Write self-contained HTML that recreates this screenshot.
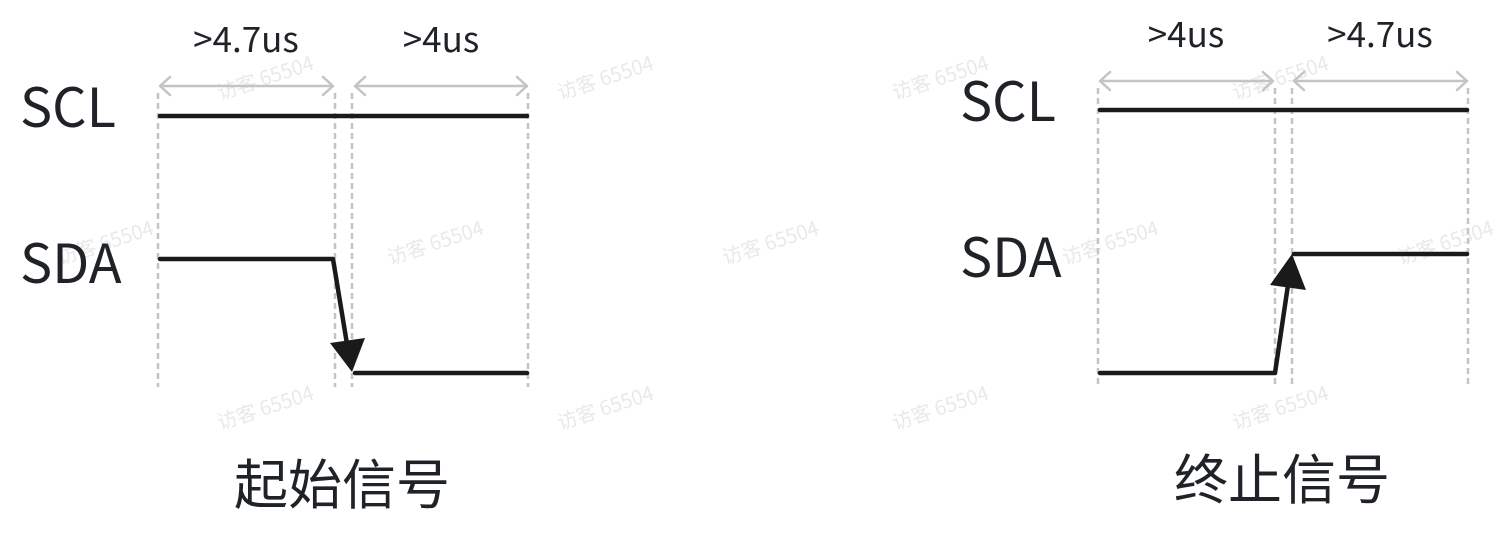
<!DOCTYPE html>
<html><head><meta charset="utf-8"><style>
html,body{margin:0;padding:0;background:#fff;width:1508px;height:543px;overflow:hidden}
svg{display:block}
text{font-family:"Noto Sans CJK SC","Liberation Sans",sans-serif;fill:#1f2328}
text.wm{font-size:20px;fill:#e9e9e9}
</style></head><body>
<svg width="1508" height="543" viewBox="0 0 1508 543" xmlns="http://www.w3.org/2000/svg">
<text class="wm" x="220" y="100" transform="rotate(-18 220 100)">访客 65504</text>
<text class="wm" x="560" y="100" transform="rotate(-18 560 100)">访客 65504</text>
<text class="wm" x="895" y="100" transform="rotate(-18 895 100)">访客 65504</text>
<text class="wm" x="1235" y="100" transform="rotate(-18 1235 100)">访客 65504</text>
<text class="wm" x="60" y="265" transform="rotate(-18 60 265)">访客 65504</text>
<text class="wm" x="390" y="265" transform="rotate(-18 390 265)">访客 65504</text>
<text class="wm" x="725" y="265" transform="rotate(-18 725 265)">访客 65504</text>
<text class="wm" x="1065" y="265" transform="rotate(-18 1065 265)">访客 65504</text>
<text class="wm" x="1400" y="265" transform="rotate(-18 1400 265)">访客 65504</text>
<text class="wm" x="220" y="430" transform="rotate(-18 220 430)">访客 65504</text>
<text class="wm" x="560" y="430" transform="rotate(-18 560 430)">访客 65504</text>
<text class="wm" x="895" y="430" transform="rotate(-18 895 430)">访客 65504</text>
<text class="wm" x="1235" y="430" transform="rotate(-18 1235 430)">访客 65504</text>
<g stroke="#c4c4c4" stroke-width="2.5" stroke-dasharray="6 4">
<line x1="158" y1="93" x2="158" y2="387"/><line x1="335" y1="93" x2="335" y2="387"/>
<line x1="352" y1="93" x2="352" y2="387"/><line x1="528" y1="93" x2="528" y2="387"/>
<line x1="1098" y1="88" x2="1098" y2="387"/><line x1="1275" y1="88" x2="1275" y2="387"/>
<line x1="1292" y1="88" x2="1292" y2="387"/><line x1="1468" y1="88" x2="1468" y2="387"/>
</g>
<g stroke="#c4c4c4" stroke-width="2.5" fill="none" stroke-linecap="round" stroke-linejoin="round">
<path d="M160 86H333M170 77L160 86L170 95M323 77L333 86L323 95"/>
<path d="M355 86H527M365 77L355 86L365 95M517 77L527 86L517 95"/>
<path d="M1100 81H1273M1110 72L1100 81L1110 90M1263 72L1273 81L1263 90"/>
<path d="M1294 81H1467M1304 72L1294 81L1304 90M1457 72L1467 81L1457 90"/>
</g>
<g stroke="#1a1a1a" stroke-width="4.5" fill="none" stroke-linecap="round" stroke-linejoin="round">
<path d="M160 116H527"/>
<path d="M160 259H333L348 350"/>
<path d="M355 373H527"/>
<path d="M1100 110H1467"/>
<path d="M1100 373H1275L1288 285"/>
<path d="M1294 254H1467"/>
</g>
<polygon points="352,372 330,343 365,338" fill="#1a1a1a"/>
<polygon points="1292,254 1270,285 1306,290" fill="#1a1a1a"/>
<g font-size="54">
<text x="20" y="127">SCL</text>
<text x="20" y="283">SDA</text>
<text x="960" y="121">SCL</text>
<text x="960" y="277">SDA</text>
</g>
<g font-size="35" text-anchor="middle">
<text x="246" y="52">&gt;4.7us</text>
<text x="441" y="52">&gt;4us</text>
<text x="1186" y="47">&gt;4us</text>
<text x="1380" y="47">&gt;4.7us</text>
</g>
<g font-size="54" text-anchor="middle">
<text x="342" y="504">起始信号</text>
<text x="1282" y="499">终止信号</text>
</g>
</svg>
</body></html>
